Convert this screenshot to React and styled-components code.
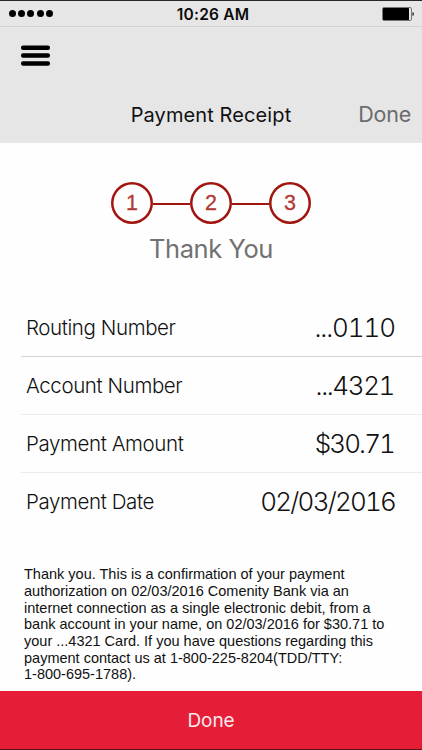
import React from "react";
import styled, { createGlobalStyle } from "styled-components";

const GlobalStyle = createGlobalStyle`
  * {
    box-sizing: border-box;
  }
  body {
    margin: 0;
    background: #fff;
  }
`;

const Screen = styled.div`
  display: flex;
  flex-direction: column;
  width: 422px;
  height: 750px;
  overflow: hidden;
  background: #fefefe;
  border-top: 1px solid #2b2728;
  font-family: Inter, "Liberation Sans", sans-serif;
  color: #111;
`;

const StatusBar = styled.div`
  display: grid;
  grid-template-columns: 1fr auto 1fr;
  align-items: center;
  height: 26px;
  padding: 0 8px 0 9px;
  background: #e6e6e6;
  border-bottom: 1px solid #d2d2d2;
`;

const Signal = styled.div`
  display: flex;
  gap: 2.2px;
`;

const Dot = styled.span`
  width: 7px;
  height: 7px;
  border-radius: 50%;
  background: #000;
`;

const Clock = styled.div`
  padding: 2px 0 0 3px;
  font-size: 15.5px;
  font-weight: 600;
  letter-spacing: 0.2px;
  color: #0b0b0b;
`;

const Battery = styled.svg`
  justify-self: end;
`;

const Header = styled.header`
  display: flex;
  flex-direction: column;
  height: 116px;
  background: #e6e6e6;
`;

const Menu = styled.button`
  width: 29px;
  height: 21px;
  margin: 18px 0 0 21px;
  padding: 0;
  border: none;
  background: none;
`;

const TitleRow = styled.div`
  display: grid;
  grid-template-columns: 1fr auto 1fr;
  align-items: baseline;
  margin-top: 35px;
  padding-right: 11px;
  padding-left: 11px;
`;

const Title = styled.h1`
  grid-column: 2;
  margin: 0;
  font-size: 20px;
  line-height: 28px;
  font-weight: 400;
  letter-spacing: 0.1px;
`;

const HeaderDone = styled.button`
  justify-self: end;
  padding: 0;
  border: none;
  background: none;
  font: inherit;
  font-size: 21.5px;
  letter-spacing: -0.2px;
  color: #6b6b6b;
`;

const Steps = styled.div`
  display: flex;
  justify-content: center;
  align-items: center;
  margin-top: 39px;
`;

const Step = styled.div`
  display: flex;
  justify-content: center;
  align-items: center;
  width: 42px;
  height: 42px;
  border-radius: 50%;
  box-shadow: inset 0 0 0 2.5px #a1150f;
  font-family: "Liberation Sans", sans-serif;
  font-size: 21.5px;
  color: #b03a36;
  -webkit-text-stroke: 0.3px #b03a36;
`;

const StepLine = styled.div`
  width: 37px;
  height: 2px;
  margin-top: 2px;
  background: #a1150f;
`;

const ThankYou = styled.h2`
  margin: 9px 0 0;
  text-align: center;
  font-size: 25.5px;
  line-height: 32px;
  font-weight: 400;
  letter-spacing: -0.45px;
  color: #717171;
`;

const Details = styled.dl`
  margin: 34px 0 0 21px;
`;

const DetailRow = styled.div`
  display: flex;
  justify-content: space-between;
  align-items: center;
  height: 58px;
  padding: 0 27px 1px 5px;
  border-bottom: 1px solid ${(props) => props.$line || "transparent"};
`;

const Label = styled.dt`
  font-size: 20.5px;
  font-weight: 300;
  letter-spacing: -0.4px;
`;

const Value = styled.dd`
  margin: 0;
  padding-right: ${(props) => props.$inset || "0"};
  font-size: 26px;
  font-weight: 300;
  font-variant-numeric: tabular-nums;
  letter-spacing: ${(props) => props.$spacing};
`;

const Notice = styled.p`
  margin: 0 0 8px 24px;
  font-family: "Liberation Sans", sans-serif;
  font-size: 14.5px;
  line-height: 16.67px;
  color: #111;
`;

const NoticeLine = styled.span`
  display: block;
  white-space: nowrap;
`;

const DoneButton = styled.button`
  height: 59px;
  padding: 0;
  border: none;
  border-bottom: 1px solid #5c1219;
  background: #e51d37;
  font: inherit;
  font-size: 19px;
  letter-spacing: -0.1px;
  color: #fbe9ec;
`;

const Spacer = styled.div`
  flex: 1;
`;

const details = [
  { label: "Routing Number", value: "...0110", spacing: "-1.1px", line: "#d4d4d4" },
  { label: "Account Number", value: "...4321", spacing: "-1.4px", inset: "1px", line: "#ececec" },
  { label: "Payment Amount", value: "$30.71", spacing: "-1.9px", inset: "1px", line: "#ececec" },
  { label: "Payment Date", value: "02/03/2016", spacing: "-1.8px" },
];

const notice = [
  "Thank you. This is a confirmation of your payment",
  "authorization on 02/03/2016 Comenity Bank via an",
  "internet connection as a single electronic debit, from a",
  "bank account in your name, on 02/03/2016 for $30.71 to",
  "your ...4321 Card. If you have questions regarding this",
  "payment contact us at 1-800-225-8204(TDD/TTY:",
  "1-800-695-1788).",
];

export default function App() {
  return (
    <>
      <GlobalStyle />
      <Screen>
        <StatusBar>
          <Signal>
            {[1, 2, 3, 4, 5].map((n) => (
              <Dot key={n} />
            ))}
          </Signal>
          <Clock>10:26 AM</Clock>
          <Battery width="32" height="14" viewBox="0 0 32 14">
            <rect x="0.5" y="0.5" width="29" height="13" rx="1.5" fill="#e6e6e6" stroke="#777" />
            <rect x="1" y="1" width="26" height="12" rx="0.5" fill="#000" />
            <path d="M30.5 5q1.5 .5 1.5 2t-1.5 2z" fill="#222" />
          </Battery>
        </StatusBar>
        <Header>
          <Menu aria-label="Menu">
            <svg width="29" height="21" viewBox="0 0 29 21" display="block">
              <rect y="0.5" width="29" height="4.5" rx="2" />
              <rect y="8.2" width="29" height="4.5" rx="2" />
              <rect y="16.2" width="29" height="4.5" rx="2" />
            </svg>
          </Menu>
          <TitleRow>
            <Title>Payment Receipt</Title>
            <HeaderDone>Done</HeaderDone>
          </TitleRow>
        </Header>
        <Steps>
          <Step>1</Step>
          <StepLine />
          <Step>2</Step>
          <StepLine />
          <Step>3</Step>
        </Steps>
        <ThankYou>Thank You</ThankYou>
        <Details>
          {details.map((item) => (
            <DetailRow key={item.label} $line={item.line}>
              <Label>{item.label}</Label>
              <Value $spacing={item.spacing} $inset={item.inset}>
                {item.value}
              </Value>
            </DetailRow>
          ))}
        </Details>
        <Spacer />
        <Notice>
          {notice.map((text) => (
            <NoticeLine key={text}>{text}</NoticeLine>
          ))}
        </Notice>
        <DoneButton>Done</DoneButton>
      </Screen>
    </>
  );
}
